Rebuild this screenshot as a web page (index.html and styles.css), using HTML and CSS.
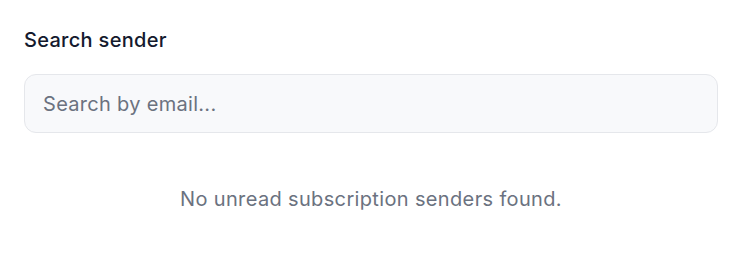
FILE: index.html
```html
<!DOCTYPE html>
<html>
<head>
<meta charset="utf-8">
<link rel="stylesheet" href="styles.css">
</head>
<body>
<div class="panel">
  <label class="label" for="s">Search sender</label>
  <input id="s" class="search" type="text" placeholder="Search by email...">
  <p class="empty">No unread subscription senders found.</p>
</div>
</body>
</html>
```
FILE: styles.css
```css
html, body {
  margin: 0;
  padding: 0;
  background: #ffffff;
}
body {
  font-family: Inter, "Noto Sans", sans-serif;
}
.panel {
  padding: 28px 25px 0 24px;
  display: flex;
  flex-direction: column;
}
.label {
  font-size: 20px;
  line-height: 24px;
  color: #141a2e;
  font-weight: 500;
  letter-spacing: 0.3px;
}
.search {
  margin-top: 22px;
  height: 59px;
  box-sizing: border-box;
  border: 1px solid #e5e7eb;
  border-radius: 12px;
  background: #f8f9fb;
  padding: 0 18px;
  font-family: inherit;
  font-size: 20px;
  color: #111827;
  outline: none;
}
.search::placeholder {
  color: #6b7280;
  letter-spacing: 0.3px;
}
.empty {
  margin: 54px 0 0;
  text-align: center;
  font-size: 20px;
  line-height: 24px;
  color: #6b7280;
  letter-spacing: 0.35px;
}
```
